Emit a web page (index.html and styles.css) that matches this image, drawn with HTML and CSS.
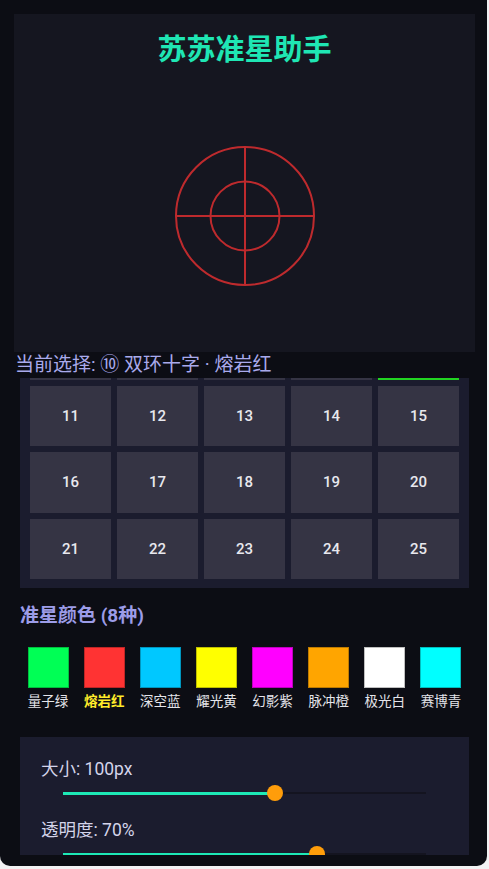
FILE: index.html
```html
<!DOCTYPE html>
<html lang="zh-CN">
<head>
<meta charset="utf-8">
<title>苏苏准星助手</title>
<link rel="stylesheet" href="styles.css">
</head>
<body>
<div class="app">
  <section class="preview">
    <h1 class="title">苏苏准星助手</h1>
    <div class="stage">
      <svg class="cross" width="142" height="142" viewBox="0 0 142 142">
        <g fill="none" stroke="#ff3333" stroke-width="2" opacity="0.72">
          <circle cx="71" cy="71" r="69"/>
          <circle cx="71" cy="71" r="34.5"/>
          <line x1="2" y1="71" x2="140" y2="71"/>
          <line x1="71" y1="2" x2="71" y2="140"/>
        </g>
      </svg>
    </div>
  </section>

  <div class="current">当前选择: ⑩ 双环十字 · 熔岩红</div>

  <div class="grid-panel">
    <div class="grid">
      <div class="cell">1</div><div class="cell">2</div><div class="cell">3</div><div class="cell">4</div><div class="cell">5</div>
      <div class="cell">6</div><div class="cell">7</div><div class="cell">8</div><div class="cell">9</div><div class="cell selected">10</div>
      <div class="cell">11</div><div class="cell">12</div><div class="cell">13</div><div class="cell">14</div><div class="cell">15</div>
      <div class="cell">16</div><div class="cell">17</div><div class="cell">18</div><div class="cell">19</div><div class="cell">20</div>
      <div class="cell">21</div><div class="cell">22</div><div class="cell">23</div><div class="cell">24</div><div class="cell">25</div>
    </div>
  </div>

  <h2 class="section-title">准星颜色 (8种)</h2>

  <div class="swatches">
    <div class="swatch"><span class="chip" style="background:#00ff55"></span><span class="name">量子绿</span></div>
    <div class="swatch active"><span class="chip" style="background:#ff3333"></span><span class="name">熔岩红</span></div>
    <div class="swatch"><span class="chip" style="background:#00c8ff"></span><span class="name">深空蓝</span></div>
    <div class="swatch"><span class="chip" style="background:#ffff00"></span><span class="name">耀光黄</span></div>
    <div class="swatch"><span class="chip" style="background:#ff00ff"></span><span class="name">幻影紫</span></div>
    <div class="swatch"><span class="chip" style="background:#ffa500"></span><span class="name">脉冲橙</span></div>
    <div class="swatch"><span class="chip" style="background:#ffffff"></span><span class="name">极光白</span></div>
    <div class="swatch"><span class="chip" style="background:#00ffff"></span><span class="name">赛博青</span></div>
  </div>

  <div class="sliders">
    <div class="slider-group">
      <div class="slider-label">大小: 100px</div>
      <div class="slider-row">
        <div class="track">
          <div class="fill" style="width:58.5%"></div>
          <span class="thumb" style="left:58.5%"></span>
        </div>
      </div>
    </div>
    <div class="slider-group">
      <div class="slider-label">透明度: 70%</div>
      <div class="slider-row">
        <div class="track">
          <div class="fill" style="width:70%"></div>
          <span class="thumb" style="left:70%"></span>
        </div>
      </div>
    </div>
  </div>
</div>
</body>
</html>
```

FILE: styles.css
```css
* { box-sizing: border-box; }

html, body {
  margin: 0;
  padding: 0;
  background: #f2f2f4;
}

body {
  font-family: Roboto, "Noto Sans CJK SC", "Noto Sans", sans-serif;
}

.app {
  width: 487px;
  height: 866px;
  background: #0c0d14;
  border-radius: 0 0 10px 10px;
  padding: 14px 12px 11px 14px;
  display: flex;
  flex-direction: column;
  overflow: hidden;
}

.preview {
  height: 338px;
  flex-shrink: 0;
  background: #151620;
  display: flex;
  flex-direction: column;
}

.title {
  margin: 0;
  padding: 14px 0 14px;
  height: 66px;
  line-height: 38px;
  text-align: center;
  font-size: 29px;
  font-weight: 700;
  color: #1fe6b4;
  font-family: "Noto Sans CJK SC", sans-serif;
}

.stage {
  flex: 1;
  display: flex;
  align-items: center;
  justify-content: center;
}

.cross { display: block; }

.current {
  height: 24px;
  line-height: 26px;
  font-size: 19px;
  color: #a9aaec;
  margin-left: 1px;
  white-space: nowrap;
  flex-shrink: 0;
}

.grid-panel {
  margin: 2px 6px 0;
  height: 210px;
  flex-shrink: 0;
  background: #1b1c2e;
  padding: 0 10px 9px;
  display: flex;
  flex-direction: column;
  justify-content: flex-end;
  overflow: hidden;
}

.grid {
  flex-shrink: 0;
  display: grid;
  grid-template-columns: repeat(5, 81px);
  grid-auto-rows: 60.5px;
  column-gap: 6px;
  row-gap: 6px;
}

.cell {
  background: #353444;
  color: #e8e8ee;
  font-size: 15px;
  font-weight: 500;
  display: flex;
  align-items: center;
  justify-content: center;
  border: 2px solid transparent;
}

.cell.selected {
  border-color: #22d422;
}

.section-title {
  margin: 16px 0 0 6px;
  height: 24px;
  line-height: 24px;
  font-size: 19px;
  font-weight: 700;
  color: #9c9ce8;
  flex-shrink: 0;
}

.swatches {
  margin: 19px 6px 0;
  display: grid;
  grid-template-columns: repeat(8, 1fr);
  flex-shrink: 0;
}

.swatch {
  display: flex;
  flex-direction: column;
  align-items: center;
}

.chip {
  width: 41px;
  height: 41px;
  box-shadow: inset 0 0 0 1px rgba(0, 0, 0, 0.25);
}

.name {
  margin-top: 4px;
  height: 18px;
  line-height: 18px;
  font-size: 13.5px;
  color: #e4e4ea;
  white-space: nowrap;
}

.swatch.active .name {
  color: #ffeb2a;
  font-weight: 700;
}

.sliders {
  margin: 27px 6px 0;
  flex: 1;
  min-height: 0;
  overflow: hidden;
  background: #1b1c2e;
  padding: 22px 21px 0;
}

.slider-group + .slider-group {
  margin-top: 13px;
}

.slider-label {
  height: 20px;
  line-height: 20px;
  font-size: 17.5px;
  color: #d4d4ea;
  white-space: nowrap;
}

.slider-row {
  height: 28px;
  display: flex;
  align-items: center;
  padding: 0 22px;
}

.track {
  position: relative;
  flex: 1;
  height: 2px;
  background: #141420;
  display: flex;
  align-items: center;
}

.fill {
  height: 3px;
  background: #1de9b6;
}

.thumb {
  position: absolute;
  top: 50%;
  width: 16px;
  height: 16px;
  border-radius: 50%;
  background: #ff9d0a;
  transform: translate(-50%, -50%);
}
```
